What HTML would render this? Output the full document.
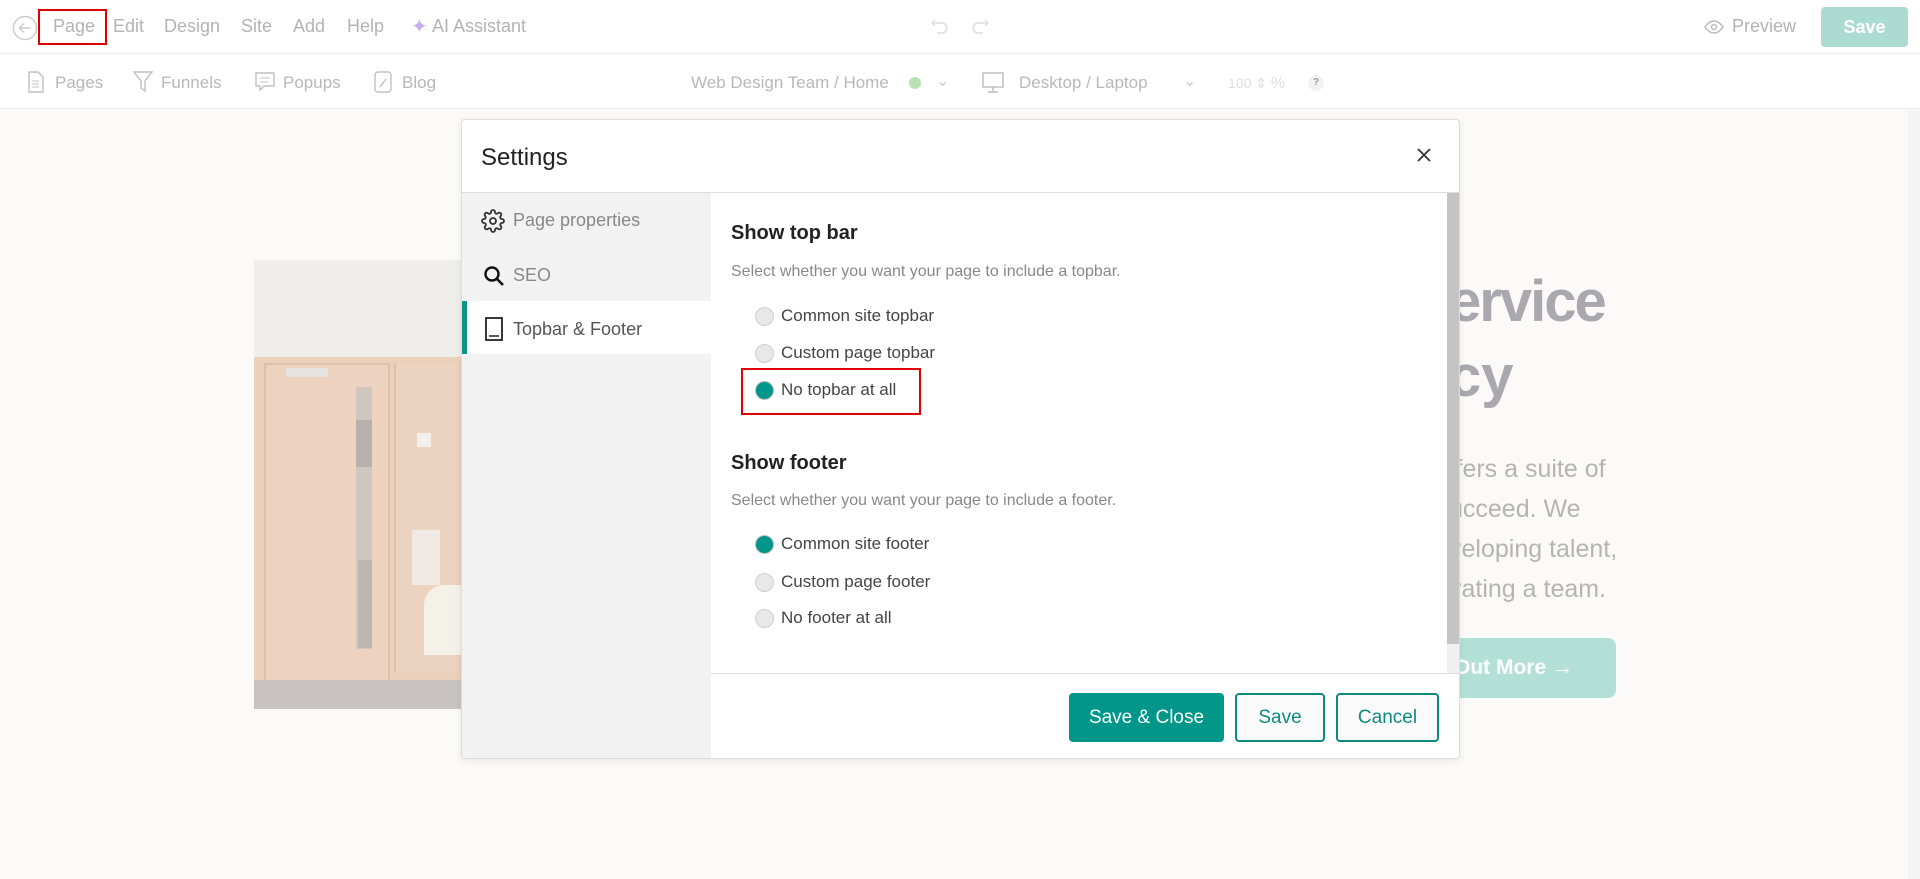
<!DOCTYPE html>
<html><head><meta charset="utf-8"><style>
*{box-sizing:border-box;margin:0;padding:0}
body{width:1920px;height:879px;overflow:hidden;background:#fbfaf9;font-family:"Liberation Sans",sans-serif;position:relative}
.a{position:absolute;white-space:nowrap}
.top{position:absolute;left:0;top:0;width:1920px;height:54px;background:#fff;border-bottom:1px solid #eee}
.sub{position:absolute;left:0;top:55px;width:1920px;height:54px;background:#fff;border-bottom:1px solid #e8e8e8}
.m{color:#b3b3b3;font-size:18px}
.s{color:#b8b8b8;font-size:17px}
.modal{position:absolute;left:461px;top:119px;width:999px;height:640px;background:#fff;border:1px solid #ddd;border-radius:4px;box-shadow:0 2px 8px rgba(0,0,0,.08);overflow:hidden}
.nav{position:absolute;left:0;top:73px;width:249px;height:566px;background:#f2f2f2}
.radio{position:absolute;width:19px;height:19px;border-radius:50%;background:#e8e8e8;border:1px solid #d0d0d0}
.radio.on{background:#00968a;border:1px solid #bfbfbf}
.rl{font-size:17px;color:#444}
.btn{position:absolute;top:573px;height:49px;border-radius:4px;font-size:19px;display:flex;align-items:center;justify-content:center}
</style></head><body>
<!-- background page photo -->
<div class="a" style="left:254px;top:260px;width:207px;height:449px;background:#efeeeb;overflow:hidden">
  <div class="a" style="left:0;top:97px;width:207px;height:340px;background:#ebd0bb"></div>
  <div class="a" style="left:10px;top:103px;width:126px;height:330px;background:#ecd2bf;border:2px solid #dfc0a8"></div>
  <div class="a" style="left:32px;top:108px;width:42px;height:9px;background:#e6e4e2"></div>
  <div class="a" style="left:102px;top:127px;width:16px;height:262px;background:#cfc6bf"></div>
  <div class="a" style="left:102px;top:160px;width:16px;height:47px;background:#b8b2ad"></div>
  <div class="a" style="left:104px;top:300px;width:14px;height:88px;background:#bdb7b2"></div>
  <div class="a" style="left:140px;top:103px;width:64px;height:310px;background:#ecd3c0;border-left:2px solid #dfc0a8"></div>
  <div class="a" style="left:163px;top:173px;width:14px;height:14px;background:#f3f0ee"></div>
  <div class="a" style="left:158px;top:270px;width:28px;height:55px;background:#f0e9e4"></div>
  <div class="a" style="left:0;top:420px;width:207px;height:29px;background:#c9c4c1"></div>
  <div class="a" style="left:170px;top:325px;width:45px;height:70px;background:#f4f1e9;border-radius:20px 0 0 0"></div>
</div>
<div class="a" style="left:1449px;top:268px;font-size:58px;font-weight:bold;color:#a9a8ae;letter-spacing:-2px">ervice</div>
<div class="a" style="left:1449px;top:343px;font-size:58px;font-weight:bold;color:#a9a8ae">cy</div>
<div class="a" style="left:1449px;top:449px;font-size:25px;color:#b4b4b4;line-height:40px">ffers a suite of<br>ucceed. We<br>veloping talent,<br>vating a team.</div>
<div class="a" style="left:1440px;top:638px;width:176px;height:60px;background:#b3e0d6;border-radius:8px;color:#fff;font-size:21px;font-weight:bold;padding:18px 0 0 14px">Out More →</div>

<div class="top">
  <svg class="a" style="left:12px;top:15px" width="26" height="26" viewBox="0 0 26 26"><circle cx="13" cy="13" r="11.5" fill="none" stroke="#ccc" stroke-width="1.5"/><path d="M18 13H8M12 8.5 7.5 13l4.5 4.5" fill="none" stroke="#ccc" stroke-width="1.5"/></svg>
  <div class="a" style="left:38px;top:9px;width:69px;height:36px;border:2px solid #e00000"></div>
  <div class="a m" style="left:53px;top:16px">Page</div>
  <div class="a m" style="left:113px;top:16px">Edit</div>
  <div class="a m" style="left:164px;top:16px">Design</div>
  <div class="a m" style="left:241px;top:16px">Site</div>
  <div class="a m" style="left:293px;top:16px">Add</div>
  <div class="a m" style="left:347px;top:16px">Help</div>
  <div class="a" style="left:411px;top:14px;color:#c8aef0;font-size:20px">✦</div>
  <div class="a m" style="left:432px;top:16px">AI Assistant</div>
  <svg class="a" style="left:930px;top:16px" width="20" height="20"><path d="M5 4 2 7l3 3M2 7h10a5 5 0 0 1 0 10H7" fill="none" stroke="#ddd" stroke-width="1.5"/></svg>
  <svg class="a" style="left:970px;top:16px" width="20" height="20"><path d="M15 4l3 3-3 3M18 7H8a5 5 0 0 0 0 10h5" fill="none" stroke="#ddd" stroke-width="1.5"/></svg>
  <svg class="a" style="left:1704px;top:17px" width="20" height="20"><path d="M1 10s3.5-6 9-6 9 6 9 6-3.5 6-9 6-9-6-9-6z" fill="none" stroke="#bbb" stroke-width="1.5"/><circle cx="10" cy="10" r="2.5" fill="none" stroke="#bbb" stroke-width="1.5"/></svg>
  <div class="a m" style="left:1732px;top:16px">Preview</div>
  <div class="a" style="left:1821px;top:7px;width:87px;height:40px;background:#acdbd2;border-radius:4px;color:#fff;font-size:18px;font-weight:bold;text-align:center;line-height:40px">Save</div>
</div>
<div class="sub">
  <svg class="a" style="left:28px;top:16px" width="16" height="22"><path d="M1 1h9l5 5v15H1z" fill="none" stroke="#c0c0c0" stroke-width="1.4"/><path d="M4 10h7M4 13h7M4 16h7" stroke="#c0c0c0"/></svg>
  <div class="a s" style="left:55px;top:18px">Pages</div>
  <svg class="a" style="left:133px;top:16px" width="20" height="22"><path d="M1 1h18l-7 9v10l-4-3v-7z" fill="none" stroke="#c0c0c0" stroke-width="1.4"/></svg>
  <div class="a s" style="left:161px;top:18px">Funnels</div>
  <svg class="a" style="left:254px;top:16px" width="22" height="22"><path d="M2 2h18v13H10l-4 4v-4H2z" fill="none" stroke="#c0c0c0" stroke-width="1.4"/><path d="M6 7h10M6 11h8" stroke="#c0c0c0"/></svg>
  <div class="a s" style="left:283px;top:18px">Popups</div>
  <svg class="a" style="left:374px;top:16px" width="18" height="22"><rect x="1" y="1" width="16" height="20" rx="3" fill="none" stroke="#c0c0c0" stroke-width="1.4"/><path d="M6 16l6-8" stroke="#c0c0c0" stroke-width="1.4"/></svg>
  <div class="a s" style="left:402px;top:18px">Blog</div>
  <div class="a s" style="left:691px;top:18px">Web Design Team / Home</div>
  <div class="a" style="left:909px;top:22px;width:12px;height:12px;border-radius:50%;background:#b7e3b0"></div>
  <div class="a" style="left:936px;top:16px;color:#ccc;font-size:16px">⌄</div>
  <svg class="a" style="left:982px;top:17px" width="22" height="22"><rect x="1" y="1" width="20" height="14" fill="none" stroke="#bbb" stroke-width="1.4"/><path d="M11 15v4M6 20h10" stroke="#bbb" stroke-width="1.4"/></svg>
  <div class="a s" style="left:1019px;top:18px">Desktop / Laptop</div>
  <div class="a" style="left:1183px;top:16px;color:#ccc;font-size:16px">⌄</div>
  <div class="a" style="left:1228px;top:20px;color:#ddd;font-size:14px">100 ⇕ <span style="font-size:16px">%</span></div>
  <div class="a" style="left:1308px;top:20px;width:16px;height:16px;border-radius:50%;background:#f2f2f2;color:#999;font-size:10px;text-align:center;line-height:16px;font-weight:bold">?</div>
</div>
<div class="a" style="left:1908px;top:110px;width:12px;height:769px;background:#f4f4f4"></div>

<div class="modal">
  <div class="a" style="left:19px;top:24px;font-size:24px;color:#222">Settings</div>
  <svg class="a" style="left:954px;top:27px" width="16" height="16"><path d="M2 2l12 12M14 2 2 14" stroke="#333" stroke-width="1.8"/></svg>
  <div class="a" style="left:0;top:72px;width:999px;height:1px;background:#ddd"></div>
  <div class="nav">
    <svg class="a" style="left:19px;top:16px" width="24" height="24" viewBox="0 0 24 24"><circle cx="12" cy="12" r="3" fill="none" stroke="#333" stroke-width="1.8"/><path d="M19.4 15a1.65 1.65 0 0 0 .33 1.82l.06.06a2 2 0 0 1-2.83 2.83l-.06-.06a1.65 1.65 0 0 0-1.82-.33 1.65 1.65 0 0 0-1 1.51V21a2 2 0 0 1-4 0v-.09A1.65 1.65 0 0 0 9 19.4a1.65 1.65 0 0 0-1.82.33l-.06.06a2 2 0 0 1-2.83-2.83l.06-.06A1.65 1.65 0 0 0 4.68 15a1.65 1.65 0 0 0-1.51-1H3a2 2 0 0 1 0-4h.09A1.65 1.65 0 0 0 4.6 9a1.65 1.65 0 0 0-.33-1.82l-.06-.06a2 2 0 0 1 2.83-2.83l.06.06A1.65 1.65 0 0 0 9 4.68a1.65 1.65 0 0 0 1-1.51V3a2 2 0 0 1 4 0v.09a1.65 1.65 0 0 0 1 1.51 1.65 1.65 0 0 0 1.82-.33l.06-.06a2 2 0 0 1 2.83 2.83l-.06.06A1.65 1.65 0 0 0 19.4 9a1.65 1.65 0 0 0 1.51 1H21a2 2 0 0 1 0 4h-.09a1.65 1.65 0 0 0-1.51 1z" fill="none" stroke="#333" stroke-width="1.8"/></svg>
    <div class="a" style="left:51px;top:17px;font-size:18px;color:#888">Page properties</div>
    <svg class="a" style="left:21px;top:72px" width="22" height="22"><circle cx="9" cy="9" r="6.5" fill="none" stroke="#111" stroke-width="2.4"/><path d="M14 14l6 6" stroke="#111" stroke-width="2.6"/></svg>
    <div class="a" style="left:51px;top:72px;font-size:18px;color:#888">SEO</div>
    <div class="a" style="left:0;top:108px;width:249px;height:53px;background:#fff;border-left:5px solid #0d9488"></div>
    <svg class="a" style="left:23px;top:124px" width="18" height="24"><rect x="1" y="1" width="16" height="22" fill="none" stroke="#222" stroke-width="1.8"/><path d="M4 19h10" stroke="#222" stroke-width="1.5"/></svg>
    <div class="a" style="left:51px;top:126px;font-size:18px;color:#555">Topbar &amp; Footer</div>
  </div>
  <div class="a" style="left:985px;top:73px;width:13px;height:480px;background:#f0f0f0"></div>
  <div class="a" style="left:985px;top:73px;width:13px;height:451px;background:#c4c4c4"></div>
  <div class="a" style="left:269px;top:102px;font-size:20px;font-weight:bold;color:#222">Show top bar</div>
  <div class="a" style="left:269px;top:143px;font-size:16px;color:#888">Select whether you want your page to include a topbar.</div>
  <div class="radio" style="left:293px;top:187px"></div><div class="a rl" style="left:319px;top:186px">Common site topbar</div>
  <div class="radio" style="left:293px;top:224px"></div><div class="a rl" style="left:319px;top:223px">Custom page topbar</div>
  <div class="a" style="left:279px;top:248px;width:180px;height:47px;border:2px solid #e00000"></div>
  <div class="radio on" style="left:293px;top:261px"></div><div class="a rl" style="left:319px;top:260px">No topbar at all</div>
  <div class="a" style="left:269px;top:332px;font-size:20px;font-weight:bold;color:#222">Show footer</div>
  <div class="a" style="left:269px;top:372px;font-size:16px;color:#888">Select whether you want your page to include a footer.</div>
  <div class="radio on" style="left:293px;top:415px"></div><div class="a rl" style="left:319px;top:414px">Common site footer</div>
  <div class="radio" style="left:293px;top:453px"></div><div class="a rl" style="left:319px;top:452px">Custom page footer</div>
  <div class="radio" style="left:293px;top:489px"></div><div class="a rl" style="left:319px;top:488px">No footer at all</div>
  <div class="a" style="left:249px;top:553px;width:750px;height:1px;background:#ddd"></div>
  <div class="btn" style="left:607px;width:155px;background:#00968a;color:#fff">Save &amp; Close</div>
  <div class="btn" style="left:773px;width:90px;border:2px solid #0d8a80;color:#0d8a80;background:#fafafa">Save</div>
  <div class="btn" style="left:874px;width:103px;border:2px solid #0d8a80;color:#0d8a80;background:#fafafa">Cancel</div>
</div>
</body></html>
